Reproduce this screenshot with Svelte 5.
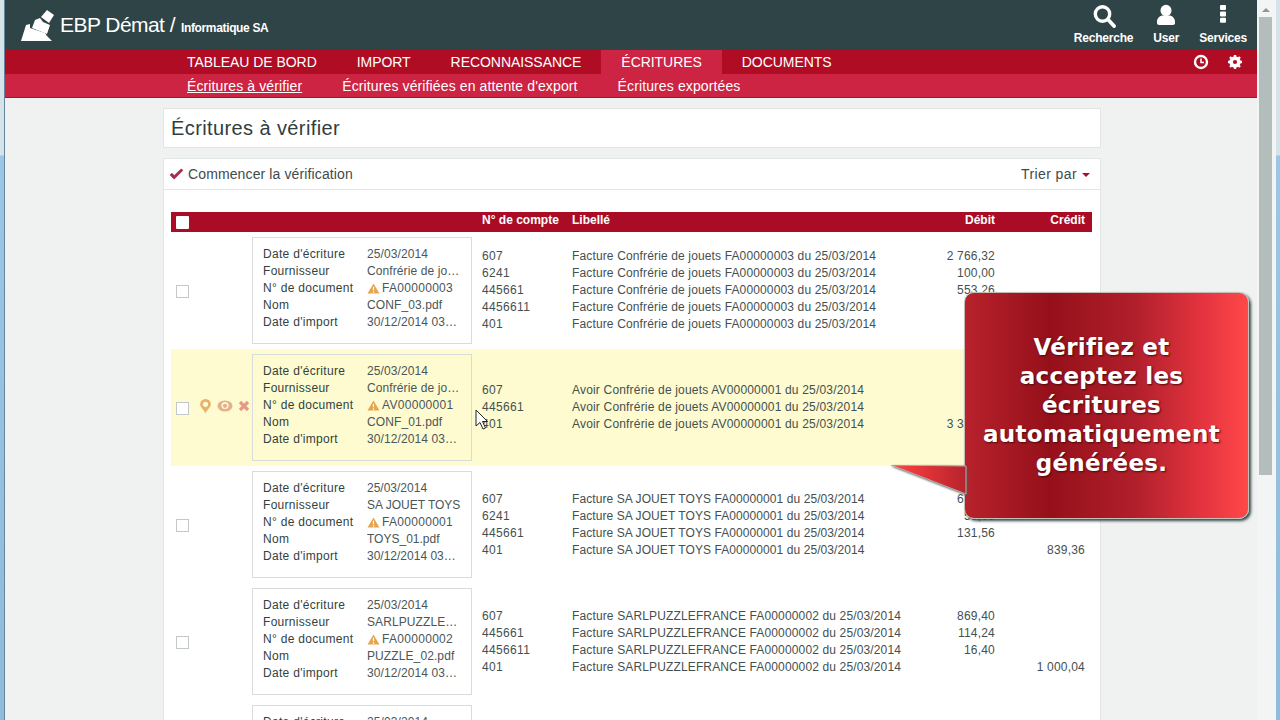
<script>
  const rows = [
    { kind:'', f:'Confrérie de jo…', doc:'FA00000003', nom:'CONF_03.pdf', lines:[
      ['607','Facture Confrérie de jouets FA00000003 du 25/03/2014','2 766,32',''],
      ['6241','Facture Confrérie de jouets FA00000003 du 25/03/2014','100,00',''],
      ['445661','Facture Confrérie de jouets FA00000003 du 25/03/2014','553,26',''],
      ['4456611','Facture Confrérie de jouets FA00000003 du 25/03/2014','20,00',''],
      ['401','Facture Confrérie de jouets FA00000003 du 25/03/2014','','3 439,58']]},
    { kind:'hover', f:'Confrérie de jo…', doc:'AV00000001', nom:'CONF_01.pdf', lines:[
      ['607','Avoir Confrérie de jouets AV00000001 du 25/03/2014','','2 800,00'],
      ['445661','Avoir Confrérie de jouets AV00000001 du 25/03/2014','','560,00'],
      ['401','Avoir Confrérie de jouets AV00000001 du 25/03/2014','3 360,00','']]},
    { kind:'tight', f:'SA JOUET TOYS', doc:'FA00000001', nom:'TOYS_01.pdf', lines:[
      ['607','Facture SA JOUET TOYS FA00000001 du 25/03/2014','657,80',''],
      ['6241','Facture SA JOUET TOYS FA00000001 du 25/03/2014','50,00',''],
      ['445661','Facture SA JOUET TOYS FA00000001 du 25/03/2014','131,56',''],
      ['401','Facture SA JOUET TOYS FA00000001 du 25/03/2014','','839,36']]},
    { kind:'', f:'SARLPUZZLE…', doc:'FA00000002', nom:'PUZZLE_02.pdf', lines:[
      ['607','Facture SARLPUZZLEFRANCE FA00000002 du 25/03/2014','869,40',''],
      ['445661','Facture SARLPUZZLEFRANCE FA00000002 du 25/03/2014','114,24',''],
      ['4456611','Facture SARLPUZZLEFRANCE FA00000002 du 25/03/2014','16,40',''],
      ['401','Facture SARLPUZZLEFRANCE FA00000002 du 25/03/2014','','1 000,04']]},
    { kind:'', f:'', doc:'', nom:'', lines:[]}
  ];
</script>

<div class="window">
  <div class="edge"></div>
  <div class="app">
    <header class="top">
      <div class="brand">
        <svg class="logo" viewBox="0 0 33 32" width="33" height="32" aria-hidden="true">
          <path fill="#fff" d="M0 31 L5 15 L9 14 L9 18 L24 23 L26 26 L31 31 Z"/>
          <path fill="#fff" d="M11 18 L14 10 L19 8 L22 12 L29 15 L26 24 Z"/>
          <path fill="#fff" d="M20 7 L26 0 L33 5 L28 13 Z"/>
        </svg>
        <span class="title">EBP Démat /</span>
        <span class="company">Informatique SA</span>
      </div>
      <div class="tools">
        <div class="tool">
          <svg viewBox="0 0 24 24" width="24" height="24" aria-hidden="true"><circle cx="10.5" cy="10" r="7.2" fill="none" stroke="#fff" stroke-width="3.4"/><path d="M16 15.5 L22 22" stroke="#fff" stroke-width="3.8" stroke-linecap="round"/></svg>
          <span>Recherche</span>
        </div>
        <div class="tool">
          <svg viewBox="0 0 24 24" width="24" height="24" aria-hidden="true"><ellipse cx="12" cy="6.5" rx="5.5" ry="5.8" fill="#fff"/><path fill="#fff" d="M3 19 C2.5 14 6 11.5 9 11.5 L15 11.5 C18 11.5 21.5 14 21 19 Q21 21 18 21 L6 21 Q3 21 3 19 Z"/></svg>
          <span>User</span>
        </div>
        <div class="tool">
          <svg viewBox="0 0 24 24" width="24" height="24" aria-hidden="true"><rect x="9" y="1" width="6" height="5" rx="1" fill="#fff"/><rect x="9" y="7.4" width="6" height="5" rx="1" fill="#fff"/><rect x="9" y="13.8" width="6" height="5" rx="1" fill="#fff"/></svg>
          <span>Services</span>
        </div>
      </div>
    </header>

    <nav class="nav">
      <a class="item">TABLEAU DE BORD</a>
      <a class="item">IMPORT</a>
      <a class="item">RECONNAISSANCE</a>
      <a class="item active">ÉCRITURES</a>
      <a class="item">DOCUMENTS</a>
      <div class="nav-icons">
        <svg viewBox="0 0 16 16" width="16" height="16" aria-hidden="true"><circle cx="8" cy="8" r="6" fill="none" stroke="#fff" stroke-width="2.4"/><path d="M8 4.5 V8.5 H11" fill="none" stroke="#fff" stroke-width="1.5"/></svg>
        <svg viewBox="0 0 16 16" width="16" height="16" aria-hidden="true"><circle cx="8" cy="8" r="4.1" fill="none" stroke="#fff" stroke-width="3.2"/><path d="M8 1 V15 M1 8 H15 M3 3 L13 13 M13 3 L3 13" stroke="#fff" stroke-width="2.4"/><circle cx="8" cy="8" r="2.1" fill="#b00c24"/></svg>
      </div>
    </nav>
    <div class="subnav">
      <a class="underline">Écritures à vérifier</a>
      <a>Écritures vérifiées en attente d'export</a>
      <a>Écritures exportées</a>
    </div>

    <main class="content">
      <section class="panel heading"><h1>Écritures à vérifier</h1></section>
      <section class="panel list">
        <div class="bar">
          <div class="start">
            <svg viewBox="0 0 16 14" width="15" height="13" aria-hidden="true"><path d="M1 7.5 L5.5 12 L15 2.5 L13 1 L5.5 8 L3 5.5 Z" fill="#a12a4e" stroke="#a12a4e" stroke-width=".6"/></svg>
            <span>Commencer la vérification</span>
          </div>
          <div class="sort"><span>Trier par</span><i class="caret"></i></div>
        </div>
        <div class="table">
          <div class="thead">
            <div class="c-check"><span class="hcheck"></span></div>
            <div class="c-box"></div>
            <div class="c-acc">N° de compte</div>
            <div class="c-lib">Libellé</div>
            <div class="c-num">Débit</div>
            <div class="c-num">Crédit</div>
          </div>
          {#each rows as r}
            <div class="row {r.kind}">
              <div class="c-check">
                <span class="check"></span>
                {#if r.kind === 'hover'}
                  <div class="actions">
                    <svg viewBox="0 0 12 14" width="13" height="15" aria-hidden="true"><path d="M6 13.5 C4.6 10 1 8 1 5 A5 5 0 0 1 11 5 C11 8 7.4 10 6 13.5 Z" fill="#e7b06c"/><circle cx="6" cy="5" r="2.4" fill="#fdfbcf"/></svg>
                    <svg viewBox="0 0 16 14" width="16" height="14" aria-hidden="true"><ellipse cx="8" cy="7" rx="7.5" ry="5.6" fill="#e4b08e"/><circle cx="8" cy="6.5" r="3.6" fill="#fdfbcf"/><circle cx="8" cy="6.8" r="2.1" fill="#e4b08e"/></svg>
                    <svg viewBox="0 0 12 12" width="12" height="12" aria-hidden="true"><path d="M2 2 L10 10 M10 2 L2 10" stroke="#e69a86" stroke-width="3.2"/></svg>
                  </div>
                {/if}
              </div>
              <div class="c-box">
                <div class="card">
                  <span class="k">Date d'écriture</span><span class="v">25/03/2014</span>
                  {#if r.f}
                    <span class="k">Fournisseur</span><span class="v">{r.f}</span>
                    <span class="k">N° de document</span>
                    <span class="v doc">
                      <svg viewBox="0 0 14 12" width="13" height="11" aria-hidden="true"><path d="M7 .5 L13.5 11.5 H.5 Z" fill="#e6a44e"/><path d="M7 4 V8 M7 9 V10.5" stroke="#fff" stroke-width="1.3"/></svg>{r.doc}
                    </span>
                    <span class="k">Nom</span><span class="v">{r.nom}</span>
                    <span class="k">Date d'import</span><span class="v">30/12/2014 03…</span>
                  {/if}
                </div>
              </div>
              <div class="lines">
                {#each r.lines as l}
                  <div class="line">
                    <div class="c-acc">{l[0]}</div>
                    <div class="c-lib">{l[1]}</div>
                    <div class="c-num">{l[2]}</div>
                    <div class="c-num">{l[3]}</div>
                  </div>
                {/each}
              </div>
            </div>
          {/each}
        </div>
      </section>
    </main>
  </div>
  <div class="scrollbar">
    <div class="arrow"></div>
    <div class="thumb"></div>
  </div>

  <svg class="cursor" viewBox="0 0 14 22" width="14" height="22" aria-hidden="true"><path d="M1 1 V17 L5 13.5 L8 20 L10.5 19 L7.5 12.5 L12.5 12.5 Z" fill="#fff" stroke="#222" stroke-width="1"/></svg>

  <aside class="callout">
    <svg class="tail" viewBox="0 0 84 44" width="84" height="44" aria-hidden="true">
      <defs><linearGradient id="tailg" x1="0" x2="1" y1="0" y2="0"><stop offset="0" stop-color="#ff4444"/><stop offset="1" stop-color="#b8222c"/></linearGradient></defs>
      <path d="M0 0 L75 1 L75 29 Z" fill="url(#tailg)" stroke="#b9b0aa" stroke-width="1"/>
    </svg>
    <p>Vérifiez et<br>acceptez les<br>écritures<br>automatiquement<br>générées.</p>
  </aside>
</div>

<style>
  :global(body) { margin: 0; background: #8fbbdc; }
  .window { position: relative; width: 1280px; height: 720px; overflow: hidden; display: flex; background: linear-gradient(#d5e4e8 0, #d5e4e8 155px, #9cc6e4 156px, #8fbbdc 100%); font-family: "Liberation Sans", Arial, sans-serif; color: #333; }
  .edge { width: 5px; flex: none; box-sizing: border-box; border-right: 1px solid #66859c; }
  .app { width: 1252px; height: 720px; background: #f0f2f1; overflow: hidden; flex: none; }
  .top { height: 50px; background: #2f4446; display: flex; justify-content: space-between; color: #fff; }
  .brand { display: flex; align-items: center; padding: 0 0 0 16px; }
  .logo { margin: 1px 6px 0 0; }
  .title { font-size: 21px; letter-spacing: -.55px; margin-right: 6px; }
  .company { font-size: 12px; font-weight: bold; margin-top: 6px; letter-spacing: -.35px; }
  .tools { display: flex; }
  .tool { display: flex; flex-direction: column; align-items: center; padding: 4px 10px 0; font-size: 12px; font-weight: bold; letter-spacing: -.2px; }
  .tool span { margin-top: 3px; }
  .nav { height: 24px; background: #b00c24; display: flex; padding-left: 162px; position: relative; color: #fff; font-size: 14px; letter-spacing: -.05px; }
  .item { padding: 0 20px; line-height: 24px; display: block; }
  .item.active { background: #cc2442; }
  .nav-icons { position: absolute; right: 14px; top: 4px; display: flex; gap: 18px; }
  .subnav { height: 24px; background: #cc2442; border-bottom: 1px solid #a8102c; box-sizing: border-box; display: flex; gap: 40px; padding-left: 182px; line-height: 24px; font-size: 14px; letter-spacing: .12px; color: #fff; }
  .underline { text-decoration: underline; }
  .content { padding: 10px 0 0 158px; width: 938px; }
  .panel { background: #fff; border: 1px solid #e2e5e5; box-sizing: border-box; }
  .heading { height: 40px; margin-bottom: 10px; }
  h1 { margin: 0; padding: 8px 0 0 7px; font-size: 20px; line-height: 23px; font-weight: normal; color: #2f3e40; letter-spacing: .4px; }
  .list { height: 600px; }
  .bar { height: 30px; border-bottom: 1px solid #e2e5e5; display: flex; justify-content: space-between; align-items: center; padding: 0 10px 0 5px; font-size: 14px; color: #414b4c; letter-spacing: .12px; }
  .start { display: flex; align-items: center; gap: 4px; }
  .sort { display: flex; align-items: center; gap: 5px; letter-spacing: .4px; }
  .caret { width: 0; height: 0; border: 4px solid transparent; border-top-color: #a8102c; border-bottom: 0; margin-top: 2px; }
  .table { margin: 22px 8px 0 7px; width: 921px; font-size: 12px; }
  .thead { height: 20px; background: #aa0b25; color: #fff; font-weight: bold; display: flex; line-height: 16px; }
  .c-check { width: 81px; flex: none; position: relative; display: flex; align-items: center; }
  .c-box { width: 230px; flex: none; }
  .c-acc { width: 90px; flex: none; }
  .c-lib { width: 333px; flex: none; }
  .c-num { width: 90px; flex: none; text-align: right; }
  .hcheck { width: 13px; height: 13px; background: #fff; margin-left: 5px; border-radius: 1px; }
  .check { width: 11px; height: 11px; border: 1px solid #c4c8c8; margin: 2px 0 0 5px; background: #fff; }
  .row { height: 117px; display: flex; align-items: center; }
  .row.hover { background: #fdfbcf; }
  .actions { position: absolute; left: 28px; top: 50%; margin-top: -9px; display: flex; align-items: center; gap: 5px; }
  .card { width: 220px; height: 107px; box-sizing: border-box; border: 1px solid #d8dcdc; padding: 8px 0 0 10px; display: grid; grid-template-columns: 104px 1fr; grid-auto-rows: 17px; line-height: 17px; }
  .k { color: #333f41; letter-spacing: .3px; }
  .v { color: #4a5658; white-space: nowrap; overflow: hidden; letter-spacing: .1px; }
  .tight .v { letter-spacing: 0; }
  .doc, .tight .doc { display: flex; align-items: center; gap: 2px; letter-spacing: .3px; }
  .lines { display: flex; flex-direction: column; color: #44504f; line-height: 17px; }
  .line { display: flex; height: 17px; white-space: nowrap; }
  .line .c-acc { letter-spacing: .35px; }
  .line .c-lib { letter-spacing: .14px; }
  .hover .line .c-lib { letter-spacing: .18px; }
  .tight .line .c-lib { letter-spacing: .08px; }
  .line .c-num { letter-spacing: .2px; }
  .scrollbar { width: 19px; height: 720px; background: #f3f5f5; flex: none; position: relative; }
  .arrow { position: absolute; left: 5px; top: 8px; width: 0; height: 0; border: 4px solid transparent; border-bottom: 4px solid #8d9795; border-top: 0; }
  .thumb { position: absolute; left: 2px; top: 17px; width: 13px; height: 458px; background: #b3bdbb; }
  .cursor { position: absolute; left: 475px; top: 409px; }
  .callout { position: absolute; left: 964px; top: 292px; width: 285px; height: 227px; box-sizing: border-box; border-radius: 10px; border: 1px solid #c7bdb7; background: linear-gradient(90deg, #b8222c 0%, #95101a 30%, #b01f2b 60%, #e63540 85%, #ff4848 100%); box-shadow: 2px 2px 3px #33484a; display: flex; align-items: center; justify-content: center; padding-right: 10px; }
  .tail { position: absolute; left: -74px; top: 172px; filter: drop-shadow(1px 1px 1px #555); }
  .callout p { margin: 0; position: relative; text-align: center; color: #fff; font-family: "DejaVu Sans", Verdana, sans-serif; font-weight: bold; font-size: 23px; line-height: 29px; letter-spacing: .3px; text-shadow: 1px 1px 2px #4a0a0a; }
</style>
